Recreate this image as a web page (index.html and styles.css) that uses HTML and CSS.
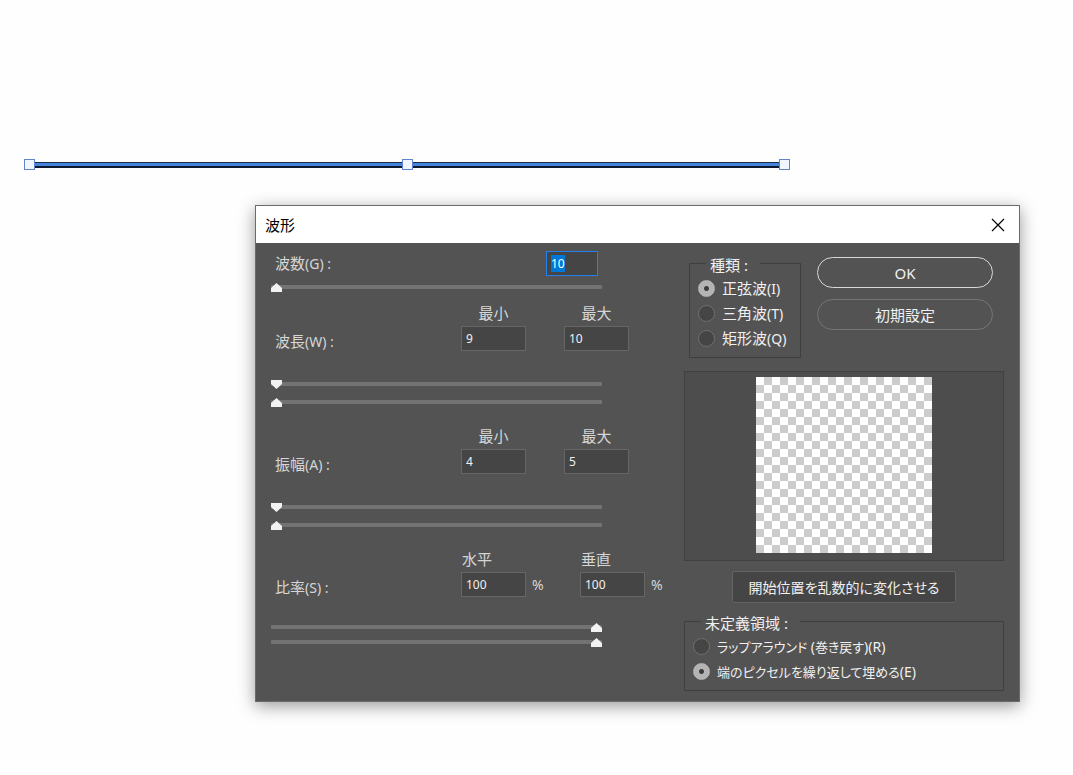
FILE: index.html
```html
<!DOCTYPE html>
<html lang="ja">
<head>
    <meta charset="UTF-8">
    <meta name="viewport" content="width=device-width, initial-scale=1.0">
    <title>波形</title>
    <link rel="stylesheet" href="styles.css">
</head>
<body>
    <!-- selected line on the canvas -->
    <div class="shape">
        <span class="handle"></span>
        <span class="stroke"></span>
        <span class="handle"></span>
        <span class="stroke"></span>
        <span class="handle"></span>
    </div>

    <form class="dialog">
        <header class="titlebar">
            <h1>波形</h1>
            <button type="button" class="close" aria-label="閉じる">
                <svg width="14" height="14" viewBox="0 0 14 14"><path d="M1 1L13 13M13 1L1 13" stroke="#000" stroke-width="1.2" fill="none"/></svg>
            </button>
        </header>

        <div class="content">
            <div class="settings">
                <section class="group">
                    <div class="fields single">
                        <label class="name" for="count">波数<small>(G) :</small></label>
                        <input type="text" id="count" value="10">
                    </div>
                    <div class="sliders">
                        <input type="range" class="up" min="10" max="999" value="10" aria-label="波数">
                    </div>
                </section>

                <section class="group">
                    <div class="fields">
                        <span class="name">波長<small>(W) :</small></span>
                        <div class="field">
                            <label for="wave-min">最小</label>
                            <input type="text" id="wave-min" value="9">
                        </div>
                        <div class="field">
                            <label for="wave-max">最大</label>
                            <input type="text" id="wave-max" value="10">
                        </div>
                    </div>
                    <div class="sliders">
                        <input type="range" class="down" min="9" max="999" value="9" aria-label="波長 最小">
                        <input type="range" class="up" min="10" max="999" value="10" aria-label="波長 最大">
                    </div>
                </section>

                <section class="group">
                    <div class="fields">
                        <span class="name">振幅<small>(A) :</small></span>
                        <div class="field">
                            <label for="amp-min">最小</label>
                            <input type="text" id="amp-min" value="4">
                        </div>
                        <div class="field">
                            <label for="amp-max">最大</label>
                            <input type="text" id="amp-max" value="5">
                        </div>
                    </div>
                    <div class="sliders">
                        <input type="range" class="down" min="4" max="999" value="4" aria-label="振幅 最小">
                        <input type="range" class="up" min="5" max="999" value="5" aria-label="振幅 最大">
                    </div>
                </section>

                <section class="group ratio">
                    <div class="fields">
                        <span class="name">比率<small>(S) :</small></span>
                        <div class="field">
                            <label for="scale-x">水平</label>
                            <div class="unit"><input type="text" id="scale-x" value="100"><small>%</small></div>
                        </div>
                        <div class="field">
                            <label for="scale-y">垂直</label>
                            <div class="unit"><input type="text" id="scale-y" value="100"><small>%</small></div>
                        </div>
                    </div>
                    <div class="sliders">
                        <input type="range" class="up" min="1" max="100" value="100" aria-label="比率 水平">
                        <input type="range" class="up" min="1" max="100" value="100" aria-label="比率 垂直">
                    </div>
                </section>
            </div>

            <div class="side">
                <div class="top">
                    <fieldset class="type">
                        <legend>種類 :</legend>
                        <label><input type="radio" name="type" checked><span>正弦波<small>(I)</small></span></label>
                        <label><input type="radio" name="type"><span>三角波<small>(T)</small></span></label>
                        <label><input type="radio" name="type"><span>矩形波<small>(Q)</small></span></label>
                    </fieldset>
                    <div class="actions">
                        <button type="submit" class="pill primary">OK</button>
                        <button type="reset" class="pill">初期設定</button>
                    </div>
                </div>

                <div class="preview"><div class="checker"></div></div>

                <button type="button" class="randomize">開始位置を乱数的に変化させる</button>

                <fieldset class="undefined-area">
                    <legend>未定義領域 :</legend>
                    <label><input type="radio" name="area"><span>ラップアラウンド <small>(</small>巻き戻す<small>)(R)</small></span></label>
                    <label><input type="radio" name="area" checked><span>端のピクセルを繰り返して埋める<small>(E)</small></span></label>
                </fieldset>
            </div>
        </div>
    </form>

    <script>
        // start with the first value selected
        const count = document.getElementById('count');
        count.focus();
        count.select();
    </script>
</body>
</html>
```
FILE: styles.css
```css
* {
    box-sizing: border-box;
}

body {
    margin: 0;
    padding: 159px 24px 40px;
    background: #fefefe;
    font-family: "Noto Sans", "Noto Sans CJK JP", sans-serif;
    font-size: 15px;
    line-height: 18px;
}

small {
    font-size: 14px;
}

button,
input {
    font-family: inherit;
}

/* line with handles */
.shape {
    display: flex;
    align-items: center;
    width: 766px;
}

.handle {
    width: 11px;
    height: 11px;
    background: #f1f5fd;
    border: 1px solid #6085cd;
}

.stroke {
    flex: 1;
    height: 6px;
    background: #4584dc;
    border-top: 1px solid #1b2a48;
    border-bottom: 2px solid #0e1830;
}

/* dialog */
.dialog {
    width: 765px;
    margin: 35px 0 0 231px;
    background: #535353;
    border: 1px solid #6b6b6b;
    box-shadow: 0 4px 16px rgba(0, 0, 0, 0.4);
    color: #d6d6d6;
}

.titlebar {
    display: flex;
    align-items: center;
    justify-content: space-between;
    height: 37px;
    padding: 0 9px;
    background: #fff;
    color: #000;
}

.titlebar h1 {
    margin: 0;
    font-size: 15px;
    font-weight: normal;
}

.close {
    display: flex;
    padding: 5px;
    border: none;
    background: none;
}

.content {
    display: flex;
    justify-content: space-between;
    padding: 8px 15px 10px;
}

.settings {
    display: flex;
    flex-direction: column;
    gap: 20px;
    width: 400px;
}

.fields {
    display: flex;
    align-items: flex-end;
    gap: 38px;
}

.name {
    width: 152px;
    padding-left: 4px;
}

.field {
    display: flex;
    flex-direction: column;
    gap: 4px;
    text-align: center;
}

input[type="text"] {
    display: block;
    width: 65px;
    height: 25px;
    padding: 0 4px;
    background: #454545;
    border: 1px solid #666;
    color: #f0f0f0;
    font-size: 12px;
    outline: none;
}

input::selection {
    background: #0078d7;
    color: #fff;
}

.single {
    align-items: center;
    justify-content: space-between;
    width: 327px;
}

.single input[type="text"] {
    width: 52px;
    border-color: #2680eb;
}

.unit {
    display: flex;
    align-items: center;
    gap: 6px;
}

.unit small {
    width: 10px;
}

.ratio .field {
    text-align: left;
}

.ratio .field label {
    padding-left: 1px;
}

/* sliders */
.sliders {
    display: flex;
    flex-direction: column;
    gap: 8px;
    width: 331px;
    margin-top: 28px;
}

.single + .sliders {
    margin: 6px 0 -8px;
}

.ratio .sliders {
    gap: 5px;
    margin-top: 25px;
}

input[type="range"] {
    -webkit-appearance: none;
    appearance: none;
    display: block;
    width: 100%;
    height: 10px;
    margin: 0;
    background: none;
}

input[type="range"]::-webkit-slider-runnable-track {
    height: 4px;
    background: #737373;
    border-radius: 1px;
}

input[type="range"]::-webkit-slider-thumb {
    -webkit-appearance: none;
    width: 11px;
    height: 9px;
    margin-top: -2px;
    background: #f2f2f2;
    clip-path: polygon(50% 0, 100% 55%, 100% 100%, 0 100%, 0 55%);
}

input.down::-webkit-slider-thumb {
    clip-path: polygon(0 0, 100% 0, 100% 45%, 50% 100%, 0 45%);
}

/* right side */
.side {
    display: flex;
    flex-direction: column;
    width: 320px;
    padding-top: 1px;
}

.top {
    display: flex;
    justify-content: space-between;
    padding: 0 11px 0 5px;
}

fieldset {
    margin: 0;
    padding: 2px 8px 6px;
    border: 1px solid #3f3f3f;
    color: #f0f0f0;
}

legend {
    height: 22px;
    margin-left: 8px;
    padding: 4px 12px 0 4px;
}

fieldset label {
    display: flex;
    align-items: center;
    gap: 7px;
    height: 25px;
    white-space: nowrap;
}

.type {
    width: 112px;
}

.undefined-area {
    margin-top: 7px;
}

.undefined-area label {
    font-size: 13px;
    font-feature-settings: "palt";
}

input[type="radio"] {
    -webkit-appearance: none;
    appearance: none;
    flex: none;
    width: 17px;
    height: 17px;
    margin: 0;
    background: #454545;
    border: 1px solid #707070;
    border-radius: 50%;
}

input[type="radio"]:checked {
    background: radial-gradient(circle, #3c3c3c 2px, #b4b4b4 3px);
    border-color: #b4b4b4;
}

.actions {
    display: flex;
    flex-direction: column;
    gap: 11px;
    width: 176px;
    padding-top: 5px;
}

.pill {
    height: 31px;
    padding: 0;
    background: none;
    border: 1px solid #757575;
    border-radius: 16px;
    color: #f0f0f0;
    font-size: 15px;
}

.primary {
    border-color: #d8d8d8;
}

.preview {
    display: flex;
    justify-content: center;
    margin-top: 13px;
    padding: 5px 0 7px;
    background: #4d4d4d;
    border: 1px solid #404040;
}

.checker {
    width: 176px;
    height: 176px;
    background: conic-gradient(#ccc 25%, #fff 0 50%, #ccc 0 75%, #fff 0) 0 0 / 16px 16px;
}

.randomize {
    align-self: center;
    width: 224px;
    height: 32px;
    margin-top: 10px;
    padding: 0;
    background: #454545;
    border: 1px solid #636363;
    border-radius: 2px;
    color: #f0f0f0;
    font-size: 14px;
    font-feature-settings: "palt";
}
```
